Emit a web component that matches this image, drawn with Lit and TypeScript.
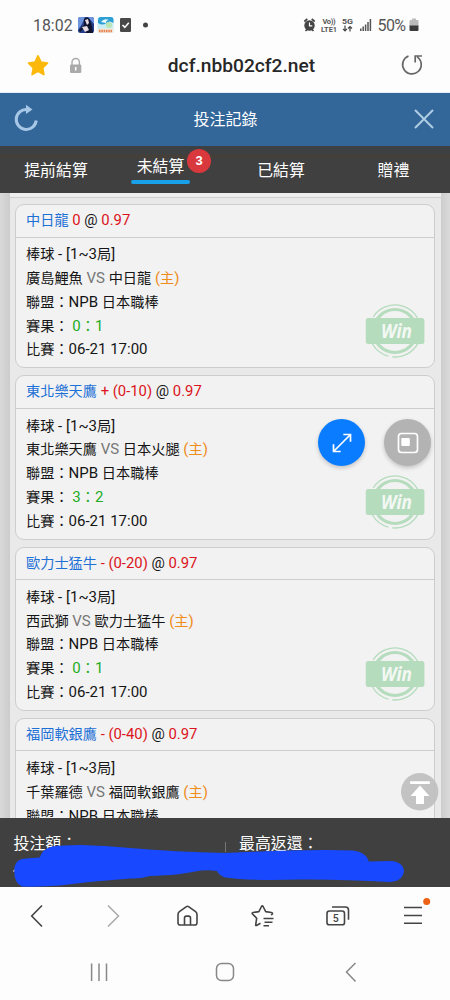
import { LitElement, html, css } from "lit";
import { customElement, property } from "lit/decorators.js";

interface Bet {
  pick: string;
  line: string;
  odds: string;
  away: string;
  home: string;
  score: string;
}

const BETS: Bet[] = [
  { pick: "中日龍", line: "0", odds: "0.97", away: "廣島鯉魚", home: "中日龍", score: "0：1" },
  { pick: "東北樂天鷹", line: "+ (0-10)", odds: "0.97", away: "東北樂天鷹", home: "日本火腿", score: "3：2" },
  { pick: "歐力士猛牛", line: "- (0-20)", odds: "0.97", away: "西武獅", home: "歐力士猛牛", score: "0：1" },
  { pick: "福岡軟銀鷹", line: "- (0-40)", odds: "0.97", away: "千葉羅德", home: "福岡軟銀鷹", score: "0：1" },
];

// Latin runs are set slightly larger than the Chinese around them.
const mixed = (text: string) =>
  text
    .split(/([\x20-\x7e]+)/)
    .filter((s) => s)
    .map((s) => (/^[\x20-\x7e]/.test(s) ? html`<span class="lat">${s}</span>` : s));

@customElement("win-stamp")
class WinStamp extends LitElement {
  static styles = css`
    :host { display: block; width: 60px; height: 56px; }
    svg { display: block; }
    .word { font: italic 700 19.5px "Noto Sans", "Open Sans", sans-serif; }
  `;
  render() {
    return html`<svg width="60" height="56" viewBox="0 0 60 56">
      <circle cx="30" cy="28" r="21.5" fill="none" stroke="#b5dcbd" stroke-width="3.2" />
      <circle cx="30" cy="28" r="26" fill="none" stroke="#b5dcbd" stroke-width="1.3" stroke-dasharray="44 3 30 4 46 3 33" transform="rotate(-75 30 28)" />
      <rect x=".8" y="15" width="58.6" height="26" rx="2.5" fill="#b5dcbd" />
      <text class="word" x="16" y="35.3" fill="#f4f8f4" textLength="31" lengthAdjust="spacingAndGlyphs">Win</text>
    </svg>`;
  }
}

@customElement("bet-card")
class BetCard extends LitElement {
  @property({ attribute: false }) bet!: Bet;
  static styles = css`
    :host {
      display: block; box-sizing: border-box; height: 164.4px; flex: none;
      border: 1px solid #cdcdcd; border-radius: 9px; background: #f2f2f2;
      color: #151515; font: 14.2px Roboto, "Noto Sans CJK TC", sans-serif;
      white-space: pre;
    }
    .lat { font-size: 15px; }
    .head .lat { font-size: 14.85px; }
    .head { height: 31.5px; line-height: 31px; padding-left: 10px; border-bottom: 1px solid #cdcdcd; }
    .body { display: flex; justify-content: space-between; padding: 5.7px 9px 0 10px; }
    .row { height: 23.8px; line-height: 23.8px; }
    .pick { color: #1d70d6; }
    .red { color: #dc1420; }
    .vs { color: #777; }
    .host { color: #ef8c1a; }
    .score { color: #22ac22; }
    win-stamp { align-self: flex-end; margin-bottom: 3.3px; }
  `;
  render() {
    const b = this.bet;
    return html`<div class="head"><span class="pick">${b.pick}</span><span class="lat"> </span><span class="red">${mixed(b.line)}</span><span class="lat"> @ </span><span class="red">${mixed(b.odds)}</span></div
      ><div class="body"><div
        ><div class="row">${mixed("棒球 - [1~3局]")}</div
        ><div class="row">${b.away}<span class="vs">${mixed(" VS ")}</span>${b.home}<span class="host">${mixed(" (主)")}</span></div
        ><div class="row">${mixed("聯盟：NPB 日本職棒")}</div
        ><div class="row">賽果：<span class="score">${mixed(" " + b.score)}</span></div
        ><div class="row">${mixed("比賽：06-21 17:00")}</div
      ></div><win-stamp></win-stamp></div>`;
  }
}

@customElement("app-root")
class AppRoot extends LitElement {
  static styles = css`
    :host {
      display: flex; flex-direction: column; width: 450px; height: 1000px; overflow: hidden;
      position: relative; background: #fdfdfd; font-family: Roboto, "Noto Sans CJK TC", sans-serif;
    }
    svg { display: block; flex: none; }
    .status { height: 50px; flex: none; display: flex; align-items: center; padding: 0 31px 0 33px; box-sizing: border-box; color: #555; }
    .clock { font-size: 15.9px; width: 44px; }
    .spacer { flex: 1; }
    .pct { font-size: 16px; font-weight: 400; color: #555; width: 31.5px; letter-spacing: -.6px; }
    .tiny { font: 700 7.4px Roboto, sans-serif; }
    .url { height: 43px; flex: none; display: flex; align-items: center; padding: 0 24px 12px 26px; box-sizing: border-box; }
    .url { border-bottom: 1px solid #e4eefa; }
    .address { flex: 1; text-align: center; font-size: 19.2px; font-weight: 500; color: #272727; padding-left: 15px; }
    .title { height: 53px; flex: none; display: flex; align-items: center; justify-content: space-between; padding: 0 15px 2px 14px; box-sizing: border-box; background: #336699; color: #fff; font-size: 16px; }
    .title span { padding: 0 1px 1px 0; }
    .title .reload { margin-bottom: 2px; }
    .tabs { height: 47px; flex: none; background: linear-gradient(#3e4143 0 8px, #453f37 9px 11px, #404040 12px); color: #fff; font-size: 15.9px; display: flex; position: relative; line-height: 24px; }
    .tab { padding-top: 13px; text-align: center; box-sizing: border-box; }
    .t1 { width: 112px; } .t2 { width: 97px; padding-top: 8.5px; } .t3 { width: 144px; } .t4 { width: 81px; }
    .t2 .bar { width: 59px; height: 4px; border-radius: 2px; background: #18a0e8; margin: 1.5px auto 0; }
    .badge { position: absolute; left: 187px; top: 3px; width: 24px; height: 24px; border-radius: 50%; background: #d9383d; font: 700 13px/24px "Liberation Sans", sans-serif; text-align: center; }
    .scroll { height: 625px; flex: none; overflow: hidden; position: relative; padding: 0 9px 0 9.5px; background: linear-gradient(90deg, #d9d9d9, #cdcdcd 9px, #cdcdcd 441px, #dadada); box-sizing: border-box; }
    .list { background: #e9e9e9; height: 640px; padding: 0 6px 0 5.5px; display: flex; flex-direction: column; gap: 6.9px; }
    .edge { height: 4px; flex: none; margin: 0 -6px 0 -5.5px; border-bottom: 1px solid #cecece; background: #eee; margin-bottom: -.8px; }
    .fab { position: absolute; width: 47px; height: 47px; border-radius: 50%; box-shadow: 0 2px 4px #0003; }
    .expand { left: 317.5px; top: 226px; background: #0a7cff; }
    .window { left: 384px; top: 226px; background: #b3b3b3; }
    .top { position: absolute; left: 401px; top: 580px; }
    .totals { height: 69px; flex: none; background: #404040; color: #fff; font-size: 15.9px; line-height: 24px; display: flex; position: relative; box-sizing: border-box; }
    .totals div { padding-top: 14px; width: 225px; flex: none; padding-left: 13.5px; box-sizing: border-box; }
    .totals div.max { padding-left: 13px; width: 223px; }
    .totals i { width: 1px; height: 10px; background: #777; margin-top: 24px; }
    .scribble { position: absolute; left: 0; top: 0; }
    .tools { height: 57px; flex: none; display: grid; grid-template-columns: repeat(6, 75px); justify-items: center; align-items: center; }
    .sys { height: 56px; flex: none; display: grid; grid-template-columns: repeat(3, 126px); justify-content: center; justify-items: center; align-items: center; }
    .five { font: 500 10.5px Roboto, sans-serif; }
  `;

  private statusBar() {
    return html`<div class="status">
      <span class="clock">18:02</span>
      <svg width="75" height="18" viewBox="77 16 75 18">
        <rect x="78" y="17" width="16" height="16" rx="2.5" fill="#233d86" />
        <path d="M78 19q0-2 2-2h5l-3 7-4 6zM88 17h4q2 0 2 2v5z" fill="#6d94dc" />
        <path d="M84 19q4-3 6 1l2 6 1 7h-7l-2-5-4 4-1-2 5-5z" fill="#10152f" />
        <path d="M85 20l3-1 1 4-2 2zM82 27l5-1 2 4-4 2z" fill="#e8dce5" />
        <rect x="97.500" y="17" width="16" height="16" rx="2.500" fill="#cbeef4" />
        <path d="M98 20q0-3 3-3h10q2.500 0 2.500 3v3q-4-3-7 0-4 3-8.500 0z" fill="#2d9fd3" />
        <path d="M101 22q3-4 8-2-3 0-3 3z" fill="#e9fcff" />
        <circle cx="109" cy="25" r="3" fill="#b9e4b4" />
        <rect x="98" y="28.500" width="15.500" height="4.500" fill="#f3eadc" />
        <path d="M99 31h13" stroke="#e8834e" stroke-width="2.400" stroke-dasharray="1.600 .7" />
        <rect x="120" y="18" width="11" height="14" rx="1.300" fill="#484848" />
        <path d="M122.500 25l2.300 2.400 4-4.600" fill="none" stroke="#fff" stroke-width="1.600" />
        <circle cx="145.500" cy="25" r="2.500" fill="#444" />
      </svg>
      <span class="spacer"></span>
      <svg width="75" height="18" viewBox="302 16 75 18">
        <circle cx="308.500" cy="25.500" r="5.200" fill="#444" />
        <path d="M303.300 21.500l3-2.500M313.700 21.500l-3-2.500M304.500 31l1.500-1.500M312.500 31l-1.500-1.500" stroke="#444" stroke-width="1.700" />
        <path d="M308.500 22.500v3.300h2.800" fill="none" stroke="#fff" stroke-width="1.200" />
        <text class="tiny" x="321.500" y="24" fill="#555" textLength="13">Vo))</text>
        <text class="tiny" x="320" y="31.500" fill="#555" textLength="16">LTE1</text>
        <text class="tiny" x="341" y="24" fill="#555" textLength="11" lengthAdjust="spacingAndGlyphs">5G</text>
        <path d="M344 25.500v5M342 28.800l2 2 2-2M349 31.500v-5M347 28.500l2-2 2 2" fill="none" stroke="#444" stroke-width="1.200" />
        <path d="M359.800 31v-2.500M362.200 31v-4.500M364.600 31v-6.500M367 31v-9M369.400 31v-12" stroke="#555" stroke-width="1.500" />
      </svg>
      <span class="pct">50%</span>
      <svg width="10" height="14" viewBox="0 0 10 14">
        <path d="M1.500 2h1.500V.5h4V2h1.500q1 0 1 1v5H.5V3q0-1 1-1z" fill="#bbb" />
        <path d="M.5 7.500h9v4.500q0 1-1 1h-7q-1 0-1-1z" fill="#3c3c3c" />
      </svg>
    </div>`;
  }

  private urlBar() {
    return html`<div class="url">
      <svg width="58" height="24" viewBox="26 54 58 24">
        <path d="M38 57l2.900 6.200 6.500.9-4.800 4.700 1.200 6.700-5.800-3.200-5.800 3.200 1.200-6.700-4.800-4.700 6.500-.9z" fill="#fdb90b" stroke="#fdb90b" stroke-width="1.800" stroke-linejoin="round" />
        <path d="M72 66v-2.800a3.700 3.700 0 0 1 7.400 0v2.800" fill="none" stroke="#aaa" stroke-width="1.400" />
        <rect x="70" y="65.500" width="11.300" height="8.500" rx="1.200" fill="#aaa" />
        <path d="M75.700 68v3.500" stroke="#fff" stroke-width="1.600" />
      </svg>
      <span class="address">dcf.nbb02cf2.net</span>
      <svg width="42" height="26" viewBox="384 52 42 26">
        <path d="M408.500 56a9.300 9.300 0 1 0 8.600.9M415.200 62.500v-6.500h6.800" fill="none" stroke="#666" stroke-width="1.700" />
      </svg>
    </div>`;
  }

  private tools() {
    const dark = "#444";
    return html`<div class="tools">
      <svg width="26" height="26" viewBox="24.500 903 26 26"><path d="M41.500 905.500L31.200 916l10.300 10.500" fill="none" stroke=${dark} stroke-width="1.600" /></svg>
      <svg width="26" height="26" viewBox="100.500 903 26 26"><path d="M108.500 905.500l10.500 10.500-10.500 10.500" fill="none" stroke="#aaa" stroke-width="1.500" /></svg>
      <svg width="26" height="26" viewBox="175 903 26 26">
        <path d="M178 914.500q0-1.800 1.400-2.800l6.700-4.900q1.400-1 2.800 0l6.700 4.900q1.400 1 1.400 2.800v8.200q0 2.300-2.300 2.300h-14.400q-2.300 0-2.300-2.300zM184.500 925v-7q0-1.900 1.900-1.900h2.200q1.900 0 1.900 1.900v7" fill="none" stroke=${dark} stroke-width="1.600" />
      </svg>
      <svg width="26" height="26" viewBox="250 903 26 26">
        <path d="M260.500 923.300l-4 2.200q-1 .3-.8-.8l1-6.500-4.200-4.200q-.9-1.200.5-1.500l5.900-.9 2.600-5.100q.8-1.300 1.600 0l2.600 5.100 5.700.9q1.700.3.700 1.700l-.9.900" fill="none" stroke=${dark} stroke-width="1.600" stroke-linejoin="round" />
        <path d="M263.500 918.500h10M264.500 922.200h8M263.500 925.700h5.500" stroke=${dark} stroke-width="1.600" />
      </svg>
      <svg width="26" height="26" viewBox="325 903 26 26">
        <rect x="327" y="911" width="17.500" height="13.800" rx="2.400" fill="none" stroke=${dark} stroke-width="1.600" />
        <path d="M332 907h13.500q3 0 3 3v9.800" fill="none" stroke=${dark} stroke-width="1.600" />
        <text class="five" x="335.800" y="921.700" text-anchor="middle" fill=${dark}>5</text>
      </svg>
      <svg width="36" height="36" viewBox="394.500 898 36 36">
        <path d="M403.500 907.500h18M403.500 915.500h18M403.500 923.200h18" stroke=${dark} stroke-width="1.600" />
        <circle cx="426.200" cy="901.600" r="3.500" fill="#ec6113" />
      </svg>
    </div>`;
  }

  render() {
    return html`${this.statusBar()}${this.urlBar()}
      <div class="title">
        <svg class="reload" width="25" height="28" viewBox="14 104 25 28">
          <path d="M28 109.500h-1.500a10 10 0 1 0 9.700 11" fill="none" stroke="#a7c7e6" stroke-width="3" />
          <path d="M26 104.700l6.500 4.700-6.500 4.500z" fill="#a7c7e6" />
        </svg>
        <span>投注記錄</span>
        <svg width="22" height="22" viewBox="0 0 22 22"><path d="M2 2l18 18M20 2L2 20" stroke="#afcde2" stroke-width="2" /></svg>
      </div>
      <div class="tabs">
        <div class="tab t1">提前結算</div>
        <div class="tab t2">未結算<div class="bar"></div></div>
        <div class="tab t3">已結算</div>
        <div class="tab t4">贈禮</div>
        <span class="badge">3</span>
      </div>
      <div class="scroll">
        <div class="list">
          <div class="edge"></div>
          ${BETS.map((b) => html`<bet-card .bet=${b}></bet-card>`)}
        </div>
        <div class="fab expand"><svg width="47" height="47" viewBox="317.500 419 47 47">
          <path d="M333 451.500l17-17M342.800 434.500h7.200v7.200M333 444.300v7.200h7.200" fill="none" stroke="#fff" stroke-width="1.700" />
        </svg></div>
        <div class="fab window"><svg width="47" height="47" viewBox="384 419 47 47">
          <rect x="398.500" y="433.500" width="19" height="19" rx="3" fill="none" stroke="#fff" stroke-width="1.700" />
          <rect x="401.300" y="438" width="8.500" height="8" rx="1" fill="#fff" />
        </svg></div>
        <svg class="top" width="38" height="38" viewBox="0 0 38 38">
          <circle cx="18.700" cy="18.700" r="18.700" fill="#bfbfbf" opacity=".92" />
          <rect x="9" y="8.200" width="20" height="2.800" rx="1" fill="#fff" />
          <path d="M19 12.500l9.500 10.500h-5.500v8h-8v-8h-5.500z" fill="#fff" />
        </svg>
      </div>
      <div class="totals">
        <div>投注額：</div><i></i><div class="max">最高返還：</div>
        <svg class="scribble" width="450" height="69" viewBox="0 818 450 69">
          <path d="M13.500 871.500l2.500-2.500" stroke="#ddd" stroke-width="1.500" />
          <path d="M14.500 867Q16 859 25 858.500L40 857.500Q42 849 52 846.500Q64 845 80 845Q105 845.500 130 848Q175 852 225 853Q260 851.500 290 850.500Q330 849.500 353 850.500Q366 852 369 861.500L390 861Q403 861.500 404 871Q403 881 390 882Q340 879 300 879.500Q250 881 225 877.500Q219 875 217 871Q206 869.500 195 871.500Q180 875 150 876Q140 879 130 878.500Q95 881 60 885.500Q40 887 22 886.500Q13 883 14.500 867Z" fill="#1848ff" />
        </svg>
      </div>
      ${this.tools()}
      <div class="sys">
        <svg width="24" height="24" viewBox="0 0 24 24"><path d="M4.600 3.500v17.500M12 3.500v17.500M19.500 3.500v17.500" stroke="#888" stroke-width="1.500" /></svg>
        <svg width="24" height="24" viewBox="0 0 24 24"><rect x="3.500" y="3.500" width="17" height="17" rx="5" fill="none" stroke="#888" stroke-width="1.500" /></svg>
        <svg width="24" height="24" viewBox="0 0 24 24"><path d="M16.500 3L7.500 12l9 9.500" fill="none" stroke="#888" stroke-width="1.500" /></svg>
      </div>`;
  }
}
